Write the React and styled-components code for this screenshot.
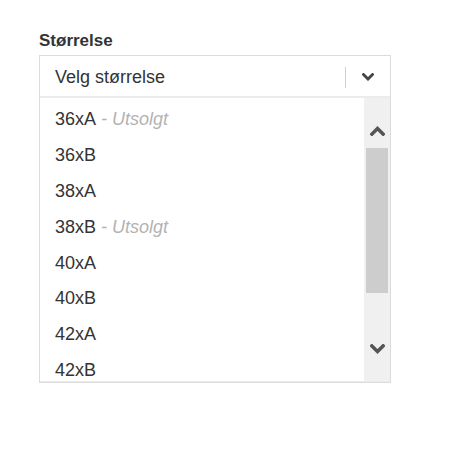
import React from "react"
import styled, { createGlobalStyle } from "styled-components"

const sizes = [
  { name: "36xA", soldOut: true },
  { name: "36xB" },
  { name: "38xA" },
  { name: "38xB", soldOut: true },
  { name: "40xA" },
  { name: "40xB" },
  { name: "42xA" },
  { name: "42xB" },
]

const Chevron = ({ up, w = 12, h = 8, color = "#444" }) => (
  <svg width={w} height={h} viewBox="0 0 12 8">
    <path
      d={up ? "M1.5 6.5 L6 2 L10.5 6.5" : "M1.5 1.5 L6 6 L10.5 1.5"}
      fill="none"
      stroke={color}
      strokeWidth="2.8"
      strokeLinecap="square"
    />
  </svg>
)

const SizePicker = () => {
  return (
    <Field>
      <Label>Størrelse</Label>
      <Select>
        <Header>
          <Placeholder>Velg størrelse</Placeholder>
          <Divider />
          <Caret>
            <Chevron w={12} h={8} />
          </Caret>
        </Header>
        <ListArea>
          <List>
            {sizes.map((item) => (
              <Option key={item.name}>
                {item.name}
                {item.soldOut && <SoldOut>&nbsp;- Utsolgt</SoldOut>}
              </Option>
            ))}
          </List>
          <Scrollbar>
            <ArrowUp>
              <Chevron up w={15} h={10} color="#555" />
            </ArrowUp>
            <Thumb />
            <ArrowDown>
              <Chevron w={15} h={10} color="#555" />
            </ArrowDown>
          </Scrollbar>
        </ListArea>
      </Select>
    </Field>
  )
}

export default function App() {
  return (
    <>
      <GlobalStyle />
      <SizePicker />
    </>
  )
}

const GlobalStyle = createGlobalStyle`
  body {
    margin: 0;
    background: #fff;
    font-family: "Liberation Sans", Arial, sans-serif;
    color: #333;
  }
  * {
    box-sizing: border-box;
  }
`

const Field = styled.div`
  padding: 31px 0 0 39px;
`

const Label = styled.div`
  font-size: 17px;
  font-weight: bold;
  line-height: 20px;
  color: #333;
  margin-bottom: 4px;
`

const Select = styled.div`
  width: 352px;
  border: 1px solid #dcdcdc;
`

const Header = styled.div`
  height: 42px;
  display: flex;
  align-items: center;
  padding: 2px 0 0 15px;
  border-bottom: 2px solid #ececec;
`

const Placeholder = styled.span`
  flex: 1;
  font-size: 18px;
  color: #333;
`

const Divider = styled.div`
  width: 1px;
  height: 21px;
  background: #d0d0d0;
`

const Caret = styled.div`
  width: 44px;
  display: flex;
  justify-content: center;
  align-items: center;
`

const ListArea = styled.div`
  display: flex;
  height: 284px;
  border-bottom: 1px solid #ececec;
`

const List = styled.div`
  flex: 1;
  overflow: hidden;
  padding-top: 4px;
`

const Option = styled.div`
  height: 35.8px;
  display: flex;
  align-items: center;
  padding-left: 15px;
  font-size: 18px;
  color: #333;
`

const SoldOut = styled.span`
  font-style: italic;
  color: #b3b3b3;
`

const Scrollbar = styled.div`
  width: 26px;
  background: #f0f0f0;
  display: grid;
  grid-template-rows: 50px 145px 1fr;
`

const ArrowUp = styled.div`
  display: flex;
  justify-content: center;
  align-items: flex-end;
  padding-bottom: 12px;
`

const Thumb = styled.div`
  margin: 0 2px;
  background: #cdcdcd;
`

const ArrowDown = styled.div`
  display: flex;
  justify-content: center;
  align-items: flex-end;
  padding-bottom: 27px;
`
